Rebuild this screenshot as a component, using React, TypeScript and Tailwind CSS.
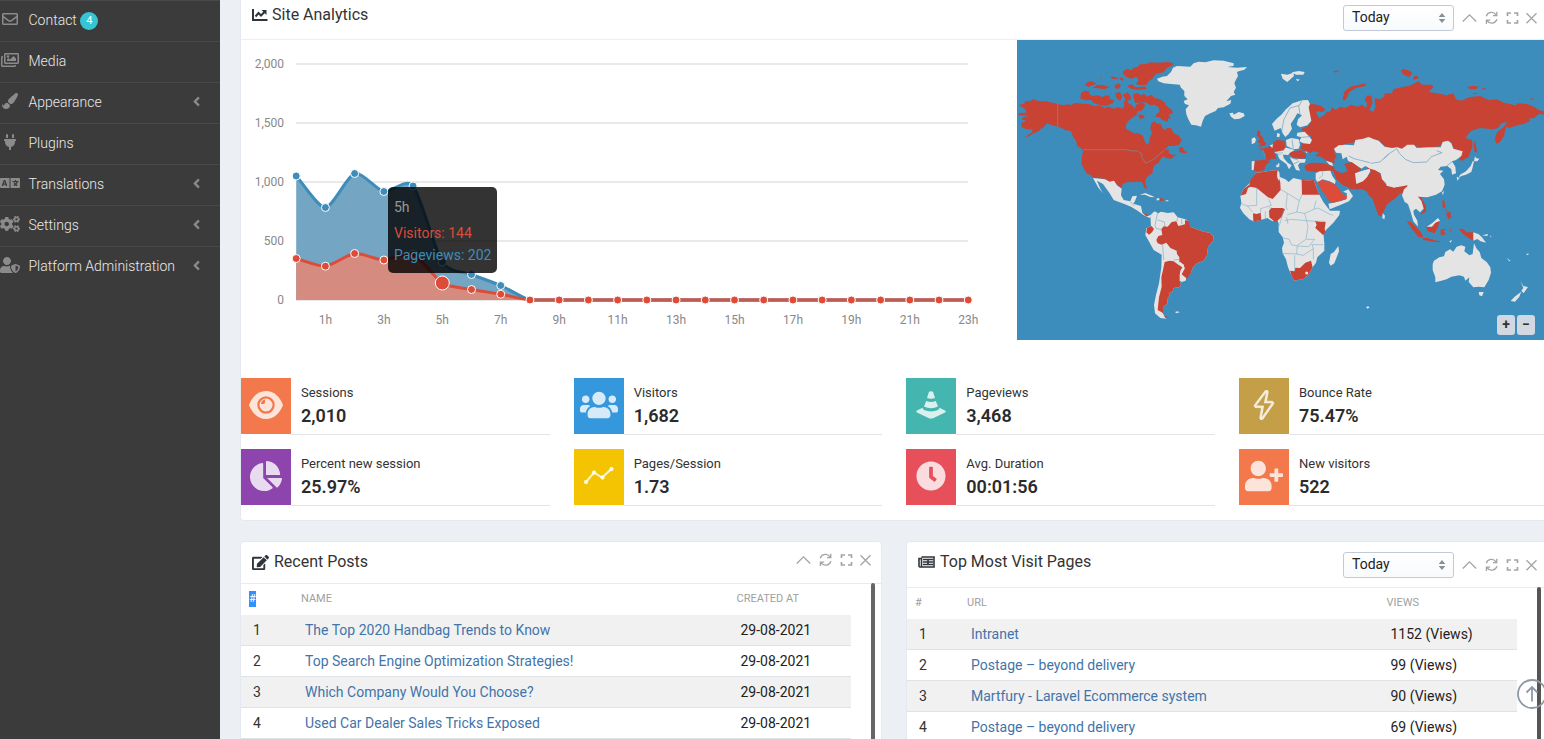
import type { ReactNode } from "react";
import { FaRegEnvelope, FaRegImages, FaPaintBrush, FaPlug, FaLanguage, FaCogs, FaUserShield, FaAngleLeft, FaUsers, FaChartPie, FaClock, FaUserPlus, FaEdit } from "react-icons/fa";
import { SlEnergy } from "react-icons/sl";

const menu: { icon: ReactNode; label: string; badge?: string; arrow?: boolean }[] = [
  { icon: <FaRegEnvelope className="size-4" />, label: "Contact", badge: "4" },
  { icon: <FaRegImages className="size-[18px]" />, label: "Media" },
  { icon: <FaPaintBrush className="size-4" />, label: "Appearance", arrow: true },
  { icon: <FaPlug className="size-4" />, label: "Plugins" },
  { icon: <FaLanguage className="size-5" />, label: "Translations", arrow: true },
  { icon: <FaCogs className="size-5" />, label: "Settings", arrow: true },
  { icon: <FaUserShield className="size-5" />, label: "Platform Administration", arrow: true },
];

function Sidebar() {
  return (
    <nav className="w-[220px] shrink-0 bg-[#3b3b3b]">
      {menu.map((m) => (
        <div key={m.label} className="flex h-[41px] items-center border-t border-[#484848] pb-0.5">
          <span className="-mt-0.5 flex w-5 shrink-0 justify-center overflow-visible text-[#8b8b8b]">{m.icon}</span>
          <span className="ml-[8.500px] whitespace-nowrap text-[14px] font-light text-[#eaeaea]">{m.label}</span>
          {m.badge && (
            <span className="ml-[3.500px] mt-[2px] flex size-[18px] items-center justify-center rounded-full bg-[#36c6d3] text-[11px] text-white">{m.badge}</span>
          )}
          {m.arrow && <FaAngleLeft className="-mt-0.5 ml-auto mr-[16px] size-[15px] text-[#8a8a8a]" />}
        </div>
      ))}
    </nav>
  );
}

function Tools() {
  return (
    <svg width="77" height="16" viewBox="0 0 77 16" fill="none" stroke="#a4a4a4" strokeWidth="1.3">
      <path d="M0.800 11.500 L7.500 4.800 L14.200 11.500" />
      <path d="M24.300 6.200 A5.400 5.400 0 0 1 34 4.800 M34.900 9.200 A5.400 5.400 0 0 1 25.200 10.800 M34.800 1.800 V5.600 H31 M24.400 14 V10.200 H28.200" />
      <path d="M45.500 6 V3 H49 M52 3 H55.500 V6 M55.500 10 V13 H52 M49 13 H45.500 V10" strokeWidth="1.700" />
      <path d="M64.500 3.200 L74.500 13.200 M74.500 3.200 L64.500 13.200" />
    </svg>
  );
}

function TodaySelect() {
  return (
    <div className="mr-2 flex h-[26px] w-[111px] items-center justify-between rounded-[3px] border border-[#c2cad8] bg-gradient-to-b from-white to-[#f8fafc] pl-2 pr-[7px] text-[14px] text-[#222]">
      <span>Today</span>
      <svg width="8" height="10" viewBox="0 0 8 10" fill="#868e96">
        <path d="M4 0 L7.300 4 H0.700Z M4 10 L7.300 6 H0.700Z" />
      </svg>
    </div>
  );
}

const HOURS = 24;
const STEP = 29.22;
const bluePts = [176, 207.5, 173.5, 191.5, 186, 262, 274.5, 285.5];
const redPts = [258.5, 266.2, 253.5, 260, 254, 283, 289.5, 294.2];
const pad = (a: number[]) => Array.from({ length: HOURS }, (_, i) => a[i] ?? 300);
const X = (i: number) => 296.2 + i * STEP;

function curve(ys: number[]) {
  const n = ys.length;
  const g = ys.map((y, i) =>
    i === 0 ? (ys[1] - y) / STEP : i === n - 1 ? (y - ys[i - 1]) / STEP : (ys[i + 1] - ys[i - 1]) / (2 * STEP)
  );
  let d = `M${X(0)},${ys[0]}`;
  const ix = STEP / 4;
  for (let i = 1; i < n; i++) {
    const a = Math.min(300, ys[i - 1] + ix * g[i - 1]);
    const b = Math.min(300, ys[i] - ix * g[i]);
    d += `C${X(i - 1) + ix},${a} ${X(i) - ix},${b} ${X(i)},${ys[i]}`;
  }
  return d;
}

function Chart() {
  const blue = pad(bluePts);
  const red = pad(redPts);
  const bd = curve(blue);
  const rd = curve(red);
  return (
    <div className="relative h-[300px] w-[776px] shrink-0">
      <svg width="776" height="300" viewBox="241 40 776 300" className="font-['Roboto']" fontSize="12" fill="#888">
        {[2000, 1500, 1000, 500, 0].map((v, i) => (
          <g key={v}>
            <path d={`M296,${64 + i * 59} H968`} stroke="#e2e2e2" strokeWidth="1.6" />
            <text x="284" y={68 + i * 59} textAnchor="end">{v.toLocaleString("en-US")}</text>
          </g>
        ))}
        {Array.from({ length: 12 }, (_, i) => i * 2 + 1).map((h) => (
          <text key={h} x={X(h)} y="324" textAnchor="middle">{h}h</text>
        ))}
        <path d={`${bd}V300H296.200Z`} fill="#74a5c2" />
        <path d={bd} fill="none" stroke="#3c8dbc" strokeWidth="3" />
        {blue.map((y, i) => (
          <circle key={i} cx={X(i)} cy={y} r="4" fill="#3c8dbc" stroke="#fff" />
        ))}
        <path d={`${rd}V300H296.200Z`} fill="#d58b80" />
        <path d={rd} fill="none" stroke="#dd4b39" strokeWidth="3" />
        <path d="M530,300 H968" stroke="#c15b50" strokeWidth="3" />
        {red.map((y, i) => (
          <circle key={i} cx={X(i)} cy={y} r={i === 5 ? 7 : 4} fill="#dd4b39" stroke="#fff" />
        ))}
      </svg>
      <div className="absolute left-[147px] top-[147px] h-[86px] w-[109px] rounded-[5px] bg-black/80 px-1.5 pt-[9px] text-[14px] leading-[22px] whitespace-nowrap">
        <div className="mb-1 text-[#999]">5h</div>
        <div className="text-[#dd4b39]">Visitors: 144</div>
        <div className="text-[#3c8dbc]">Pageviews: 202</div>
      </div>
    </div>
  );
}

const W = "#e4e4e4";
const R = "#c84334";

function WorldMap() {
  return (
    <div className="relative h-[300px] w-[527px] shrink-0 bg-[#3c8dbc]">
      <svg width="527" height="300" viewBox="1017 40 527 300" strokeLinejoin="round">
        {/* North America */}
        <g transform="translate(1017 36) scale(.33333)" fill={R}>
          <path d="M5,207 L20,203 L26,196 L40,195 L48,190 L68,196 L86,196 L100,199 L122,204 L140,208 L150,205 L162,207 L175,200 L192,203 L215,204 L232,211 L248,208 L262,216 L276,212 L290,218 L303,213 L316,218 L322,210 L320,198 L329,190 L336,204 L345,206 L352,218 L358,206 L372,198 L384,205 L382,214 L373,225 L362,226 L358,238 L345,245 L333,256 L327,268 L327,278 L340,285 L350,292 L364,292 L378,300 L383,315 L390,327 L397,318 L398,306 L405,292 L400,278 L403,262 L412,256 L422,264 L430,262 L436,275 L443,283 L450,276 L462,276 L470,292 L484,298 L494,312 L486,326 L470,330 L455,330 L440,343 L455,340 L456,352 L466,357 L478,355 L463,368 L446,366 L440,360 L430,370 L425,380 L413,388 L408,396 L407,410 L390,424 L384,434 L390,458 L382,456 L375,438 L358,437 L345,439 L332,438 L318,443 L312,456 L300,448 L291,434 L278,437 L262,428 L230,426 L222,418 L208,412 L200,396 L194,385 L195,360 L199,344 L190,336 L180,330 L178,316 L168,302 L162,286 L145,282 L125,272 L105,268 L90,262 L80,274 L72,278 L62,287 L50,292 L38,300 L22,304 L46,288 L46,280 L28,280 L15,274 L12,262 L28,254 L14,250 L20,243 L35,240 L5,238 L5,231 L28,230 L24,218Z" />
          <path d="M487,334 L498,334 L500,342 L512,350 L502,352 L486,348Z" />
          <path d="M470,82 L452,78 L420,80 L400,79 L388,84 L370,85 L362,92 L350,95 L344,103 L330,98 L318,107 L320,116 L330,124 L345,128 L358,122 L366,132 L356,144 L370,148 L388,147 L395,136 L406,128 L415,115 L440,108 L450,95 L466,89Z" />
          <path d="M348,176 L362,170 L370,178 L382,174 L390,182 L404,176 L412,186 L430,190 L444,200 L446,208 L465,222 L468,232 L455,236 L462,248 L454,246 L452,257 L436,252 L426,244 L415,242 L420,232 L428,228 L425,214 L412,206 L400,208 L390,200 L372,198 L354,202Z" />
          <path d="M192,170 L204,164 L217,166 L216,174 L226,180 L244,178 L255,184 L265,178 L278,180 L278,190 L292,192 L288,202 L266,210 L246,206 L230,202 L222,192 L206,193 L190,188Z" />
          <path d="M203,148 L212,138 L225,136 L238,143 L215,152Z M226,156 L240,146 L260,148 L278,154 L262,160 L244,157Z M282,121 L300,125 L302,130 L284,128Z M292,150 L303,142 L312,148 L308,157 L296,158Z M330,150 L345,145 L355,154 L384,152 L390,159 L360,161 L342,158Z M294,172 L308,168 L316,180 L310,194 L300,188Z M318,176 L332,168 L342,182 L340,193 L326,192Z M362,236 L378,236 L384,244 L370,249Z M308,124 L320,128 L318,134 L308,130Z M248,128 l6,-2 l0,4z" />
          <path d="M122,204 V271 M199,341 H325 L345,345 L360,344 L375,354 L374,364 L386,382 L410,370 L428,354 L441,344" fill="none" stroke="#8b7f87" strokeWidth="2.5" />
          <g fill={W}>
            <path d="M420,128 L436,122 L450,120 L462,108 L468,95 L480,90 L520,92 L530,82 L545,77 L565,79 L590,73 L620,74 L650,82 L650,89 L632,93 L660,95 L690,93 L682,101 L665,106 L660,108 L663,120 L655,135 L652,142 L657,155 L650,168 L655,176 L642,180 L628,196 L643,192 L640,203 L620,214 L603,216 L596,225 L580,232 L564,240 L557,255 L552,272 L537,268 L523,266 L514,250 L508,235 L506,220 L516,208 L504,204 L500,195 L512,190 L502,180 L502,165 L492,155 L488,146 L462,144 L440,142 L424,136Z" />
            <path d="M637,232 L648,230 L650,236 L665,228 L680,232 L683,240 L668,248 L652,250 L642,242Z" />
            <path d="M228,426 L264,430 L278,437 L291,434 L300,448 L314,458 L312,478 L320,492 L340,496 L346,481 L360,479 L354,495 L349,503 L372,510 L376,530 L388,538 L400,538 L410,527 L398,546 L378,536 L362,524 L342,512 L322,504 L290,492 L278,472 L258,444 L240,434 L250,458 L258,472 L244,455Z" />
            <path d="M368,477 L385,471 L404,479 L414,484 L400,483 L384,476Z M420,487 L428,487 L426,493 L418,493Z M446,493h8v3h-8z" />
            <path d="M704,308 L712,304 L717,310 L714,320 L704,325Z" />
          </g>
          <path d="M376,530 L390,535 L398,538 L388,541Z M428,487 L436,487 L442,493 L430,496Z" />
          <path d="M722,282 L730,287 L730,298 L738,304 L740,314 L748,322 L744,329 L722,332 L732,324 L722,318 L728,308 L719,298Z" />
        </g>

        {/* South America */}
        <g transform="translate(1017 180) scale(.33333)">
          <path d="M400,108 L412,94 L424,100 L432,95 L452,99 L470,97 L482,112 L505,118 L514,124 L520,140 L545,150 L560,155 L578,158 L590,170 L588,182 L573,200 L570,226 L560,242 L540,250 L528,262 L522,278 L508,293 L506,302 L494,306 L488,302 L492,314 L486,322 L470,324 L466,335 L455,340 L458,348 L450,358 L452,370 L440,380 L436,398 L448,416 L430,414 L414,400 L411,375 L417,345 L426,310 L433,262 L434,224 L410,210 L398,188 L385,165 L388,145 L402,138Z" fill={W} />
          <path d="M418,180 L424,168 L436,165 L433,148 L440,139 L452,140 L464,126 L478,124 L484,138 L504,133 L504,120 L516,124 L520,140 L545,150 L560,155 L578,158 L590,170 L588,182 L573,200 L570,226 L560,242 L540,250 L528,262 L522,278 L510,296 L494,283 L503,266 L500,254 L487,246 L487,232 L480,222 L479,212 L460,204 L448,188 L434,194 L422,190Z M443,246 L458,242 L470,244 L484,254 L497,262 L490,272 L488,285 L488,302 L492,314 L486,322 L470,324 L466,335 L455,340 L458,348 L450,358 L452,370 L440,380 L438,399 L422,390 L426,352 L434,320 L433,292 L438,270Z M390,143 L404,138 L411,147 L405,157 L396,164 L388,157Z M442,405 L452,412 L444,414Z" fill={R} />
          <path d="M474,396 l8,-2 l6,3 l-10,3z M484,252 L490,246 L500,254 L503,266 L492,270 L497,262Z" fill={W} />
          <path d="M433,148 L418,146 L414,136 L422,98 M422,120 L442,126 L444,139 M437,195 L440,240 M487,238 L470,240 M482,112 L480,124 M494,118 L494,132 M340,65 L352,78" fill="none" stroke="#589abe" strokeWidth="1.5" />
        </g>

        {/* Africa, southern Asia, Oceania */}
        <g transform="translate(1280 180) scale(.33333)">
          <path d="M-119,47 L-108,26 L-90,8 L-72,-22 L-50,-24 L-30,-28 L-8,-30 L-2,-22 L-2,-10 L16,-2 L26,6 L40,-6 L66,0 L102,0 L106,14 L118,44 L130,66 L150,92 L180,92 L178,105 L160,128 L138,150 L131,166 L133,192 L133,212 L112,232 L108,248 L98,262 L86,284 L70,297 L42,302 L34,286 L24,262 L18,238 L8,220 L6,204 L12,188 L8,172 L-4,156 L-4,130 L-8,120 L-22,124 L-38,114 L-58,120 L-80,124 L-92,118 L-110,100 L-120,84 L-116,68Z" fill={W} />
          <path d="M-119,47 L-108,26 L-92,14 L-88,0 L-72,-22 L-50,-24 L-30,-28 L-8,-30 L-5,-12 L1,8 L2,30 L-22,57 L-36,52 L-70,24 L-88,20 L-96,24 L-102,42Z M-81,100 L-70,102 L-58,98 L-56,121 L-80,124Z M-33,92 L-26,84 L8,84 L15,88 L4,112 L-8,122 L-16,125 L-32,112Z M65,0 L86,1 L102,0 L106,14 L118,44 L66,44Z M105,122 L120,126 L137,126 L134,146 L137,156 L130,166 L106,144 L110,134Z M30,272 L44,274 L46,263 L60,264 L76,248 L93,242 L98,262 L86,284 L70,297 L42,302 L34,286Z" fill={R} />
          <circle cx="80" cy="279" r="4.5" fill={W} />
          <path d="M-70,24 L-70,76 L-98,78 M-118,70 L-98,78 L-82,96 M-34,58 L-26,76 L-58,86 L-58,98 M-24,84 L-34,84 M-44,94 V118 M2,28 L22,40 L18,80 L22,90 M22,40 L58,62 L66,44 M58,62 L50,96 L74,100 L102,88 L108,62 M22,104 L50,96 M74,100 L80,122 L106,124 M14,122 L34,118 L80,122 L84,140 L78,178 L52,196 M8,174 L28,178 L34,194 L52,198 L50,222 L8,220 M52,198 L86,200 L104,178 L80,178 M50,222 L70,226 L100,206 L96,194 L130,194 M100,206 L100,238 M44,226 L44,272 M102,88 L114,84 L148,102 L160,106 M106,124 L136,124 M12,90 L-2,138 M20,112 L24,132" fill="none" stroke="#72a9c6" strokeWidth="1.6" />
          <path d="M175,198 L177,214 L170,232 L163,250 L152,257 L147,248 L152,222 L162,216Z" fill={W} />
          <path d="M206,26 L212,6 L228,4 L226,-8 L262,-10 L276,-30 L294,-34 L304,-10 L315,12 L345,20 L378,10 L384,16 L370,40 L362,38 L344,56 L322,72 L314,88 L304,108 L296,108 L284,76 L278,56 L268,48 L258,32 L240,26Z" fill={R} />
          <path d="M308,100 L315,107 L313,118 L307,114Z M318,10 L346,16 L346,24 L320,17Z" fill={W} />
          <path d="M366,46 L372,28 L386,16 L396,40 L412,44 L425,60 L432,85 L420,97 L408,86 L400,92 L402,104 L412,122 L414,140 L400,124 L392,96 L384,72 L374,66Z" fill={W} />
          <path d="M409,44 L420,40 L430,44 L424,54 L438,78 L438,95 L421,104 L432,88 L424,62Z M380,122 L392,126 L408,140 L424,158 L430,172 L416,172 L398,150Z M428,174 L444,174 L460,180 L480,184 L480,187 L450,184 L430,179Z M438,140 L456,140 L468,126 L478,126 L474,142 L464,160 L444,154Z M482,148 L502,148 L490,153 L498,162 L488,166 L482,164Z M536,148 L548,146 L560,157 L579,157 L580,182 L562,172 L550,162Z M487,60 L494,64 L496,84 L488,82Z M498,102 L510,94 L514,112 L506,118Z M492,84 l14,12 l-2,2z M510,142 l4,12 l-3,0z" fill={R} />
          <path d="M440,140 L456,130 L474,114 L480,122 L466,128 L456,140Z M580,157 L596,163 L606,172 L618,188 L602,184 L592,177 L580,182Z M606,166 L624,162 L622,168Z M486,38 L492,32 L489,46Z M508,183 l8,-2 l-4,7z" fill={W} />
          <path d="M458,252 L462,242 L478,232 L492,229 L496,216 L510,208 L520,215 L530,200 L544,196 L556,200 L553,214 L568,226 L578,222 L582,190 L590,206 L599,216 L604,234 L620,246 L631,262 L633,278 L626,300 L613,322 L596,320 L580,322 L566,306 L568,292 L556,302 L552,290 L538,286 L514,290 L500,298 L484,302 L466,307 L466,292 L458,270Z M596,336 L611,336 L606,349 L598,346Z M721,303 L730,318 L744,321 L736,332 L731,340 L724,332 L730,324Z M724,335 L718,350 L705,365 L692,363 L704,350Z M680,233 l12,10 l-4,1z M738,221 l10,0 l-6,5z M258,382 l6,-3 l5,3 l-6,4z M666,200 l3,6 M630,166 l5,5 l-3,1z" fill={W} />
        </g>

        {/* Northern Asia and Scandinavia */}
        <g transform="translate(1280 36) scale(.33333)">
          <path d="M86,204 L104,205 L124,210 L136,220 L130,228 L112,226 L108,232 L118,246 L134,236 L142,226 L150,228 L156,214 L168,222 L180,212 L194,216 L214,206 L232,212 L246,206 L258,216 L262,204 L254,190 L262,178 L274,180 L278,200 L268,222 L280,228 L286,214 L284,186 L300,190 L312,182 L314,172 L336,172 L340,160 L362,154 L386,150 L400,144 L415,136 L426,146 L456,146 L460,154 L446,168 L470,172 L500,178 L520,172 L528,190 L545,194 L566,184 L600,180 L626,192 L650,190 L672,200 L706,208 L714,202 L742,204 L762,212 L776,222 L794,226 L794,236 L776,234 L764,246 L746,248 L750,256 L730,264 L712,268 L688,276 L678,272 L672,300 L660,318 L650,324 L644,308 L652,288 L670,274 L682,258 L664,262 L654,276 L638,280 L600,276 L574,284 L556,306 L576,312 L578,330 L566,362 L546,374 L538,372 L546,348 L522,338 L512,318 L492,314 L482,330 L430,338 L400,328 L380,338 L350,338 L318,334 L296,314 L264,304 L226,318 L190,326 L163,338 L164,352 L170,360 L162,372 L166,382 L140,374 L122,362 L104,360 L118,350 L98,346 L90,352 L82,344 L72,346 L62,338 L66,322 L90,322 L94,300 L76,296 L64,280 L84,270 L94,256 L86,232Z" fill={R} />
          <path d="M24,350 L44,346 L62,342 L78,354 L78,366 L58,368 L40,366Z M260,386 L296,380 L300,404 L282,412 L262,398Z" fill={R} />
          <path d="M188,188 L194,166 L212,152 L256,142 L258,149 L228,156 L208,168 L200,186 L192,195Z M362,103 L372,99 L388,104 L398,112 L388,123 L370,116Z M398,126 L408,118 L418,126 L402,131Z M160,106 L180,103 L166,110Z M562,153 L578,149 L596,152 L588,160 L568,159Z M604,157 h14 l-6,5z M575,171 h16 v4z M746,191 l10,-5 l6,4z M585,310 L588,330 L592,350 L583,346 L582,325Z" fill={R} />
          <path d="M-24,264 L-10,248 L4,236 L18,220 L38,202 L66,193 L84,192 L90,204 L86,214 L94,254 L82,268 L60,274 L50,266 L54,250 L66,238 L52,232 L44,246 L32,264 L36,278 L26,294 L16,303 L8,292 L2,276 L-16,284Z M-8,290 L0,294 L-2,304 L-10,302Z M52,290 L74,287 L84,298 L96,312 L90,324 L70,322 L58,316 L64,304 L50,300Z M18,312 L34,306 L56,310 L60,326 L56,338 L40,340 L20,330Z M14,334 L44,342 L30,350 L24,358 L10,352Z M28,362 L44,368 L78,370 L74,380 L60,380 L54,388 L60,404 L48,402 L40,384Z M-6,382 l4,0 l0,10 l-4,0z M138,374 L156,380 L160,390 L148,386Z M76,344 L84,352 L78,350Z" fill={W} />
          <path d="M162,338 L176,328 L196,326 L222,328 L226,312 L250,308 L266,303 L282,310 L296,314 L314,332 L336,336 L352,334 L366,338 L382,326 L402,326 L410,336 L444,334 L482,334 L488,318 L504,314 L514,322 L520,338 L548,346 L544,360 L528,372 L516,376 L526,392 L528,412 L516,416 L514,400 L502,390 L482,392 L474,402 L490,404 L480,414 L492,430 L494,446 L486,466 L468,476 L442,484 L416,482 L400,480 L388,468 L382,448 L350,454 L322,446 L306,430 L302,412 L284,402 L270,398 L256,390 L244,398 L222,384 L204,374 L200,362 L188,370 L184,352 L168,350Z" fill={W} />
          <path d="M585,360 L588,366 L598,368 L592,376 L582,376 L578,394 L574,408 L558,416 L544,420 L536,426 L540,416 L558,406 L572,390 L578,376 L582,376Z M530,422 l8,4 l-6,8z M3,113 L22,116 L40,110 L42,120 L22,138 L8,128Z M35,109 L56,105 L74,108 L70,116 L48,116Z M48,128 l12,3 l-8,5z" fill={W} />
          <path d="M310,370 L326,354 L350,338 L358,352 L376,370 L400,380 L440,378 L454,362 L486,350 L470,344 M272,382 L300,378 L326,354 M206,360 L222,368 L246,374 L270,380 M4,290 L12,250 L30,216 L58,208 L66,193 M56,208 L60,236 M64,304 L88,302 M36,310 L40,340 M22,362 L54,372 M40,384 L58,376 M500,390 L518,376" fill="none" stroke="#5b94b8" strokeWidth="1.8" />
        </g>

        {/* Western Europe and the Middle East */}
        <g transform="translate(1235 90) scale(.33333)">
          <path d="M70,176 L88,174 L98,172 L110,164 L120,170 L118,184 L124,206 L108,206 L104,212 L90,207 L92,192 L84,182Z M58,212 L90,209 L106,214 L92,226 L88,240 L66,245 L56,240Z M116,156 L128,150 L148,152 L152,172 L144,182 L122,184 L114,172Z M208,228 L222,220 L250,218 L276,222 L298,232 L298,242 L268,242 L240,246 L214,242Z M292,236 L308,244 L320,250 L338,244 L328,222 L350,216 L380,238 L362,250 L362,282 L372,300 L345,294 L324,286 L304,268Z" fill={R} />
          <path d="M50,214 L59,213 L56,240 L50,241Z M104,166 L114,163 L112,174Z M118,187 L146,181 L162,180 L158,194 L130,194Z M128,196 L144,194 L146,204 L158,218 L170,226 L162,238 L154,222 L134,208Z M124,224 h5 v8 h-5z M242,250 L254,244 L286,242 L292,258 L302,272 L300,282 L284,274 L262,268 L248,278 L242,268Z M360,250 L382,242 L404,236 L406,244 L396,262 L384,274 L364,282Z M280,341 L318,333 L334,327 L336,310 L324,305 L340,298 L354,318 L342,334 L314,346 L284,358Z M127,246 L132,244 L134,262 L130,272 L126,258Z" fill={W} />
          <path d="M246,276 L262,270 L284,276 L300,284 L312,296 L322,312 L336,318 L334,328 L316,332 L296,338 L284,336 L274,320 L258,298Z" fill="#dd4b39" />
          <path d="M264,243 L262,256 L252,266 M118,190 L144,188 M82,175 L92,206" fill="none" stroke="#6f9fbb" strokeWidth="1.500" />
        </g>
      </svg>
      <div className="absolute bottom-[5px] right-[9px] flex gap-[2px]">
        <span className="flex h-5 w-[18px] items-center justify-center rounded-[3px] bg-[#d2d8e1] pb-0.5 text-[14px] font-bold text-[#333]">+</span>
        <span className="flex h-5 w-[18px] items-center justify-center rounded-[3px] bg-[#d2d8e1] pb-0.5 text-[14px] font-bold text-[#333]">−</span>
      </div>
    </div>
  );
}

function EyeIcon() {
  return (
    <svg width="34" height="28" viewBox="0 0 34 28">
      <path d="M0 14 C3 6 9 0 17 0 S31 6 34 14 C31 22 25 28 17 28 S3 22 0 14Z" fill="currentColor" />
      <circle cx="17" cy="14" r="7.6" fill="none" stroke="#f3784b" strokeWidth="2.2" />
      <path d="M12 13 A5 5 0 0 1 16 8.500 V11 Q16 13 14.500 13Z" fill="#f3784b" />
    </svg>
  );
}

function ConeIcon() {
  return (
    <svg width="30" height="28" viewBox="0 0 30 28" fill="currentColor">
      <path d="M13 0.8 Q15 -0.4 17 0.8 L19 7 Q15 8.5 11 7Z M10.2 10 Q15 12 19.8 10 L22 15.4 Q15 19 8 15.4Z M6.6 16.8 Q6.3 20 15 20.4 Q23.700 20 23.400 16.800 L29 19.5 Q30.500 20.600 29 21.500 L17 27.2 Q15 28 13 27.200 L1 21.500 Q-0.500 20.600 1 19.500Z" />
    </svg>
  );
}

function LineIcon() {
  return (
    <svg width="32" height="20" viewBox="0 0 32 20" fill="currentColor" stroke="currentColor">
      <path d="M3 16 L11 6.500 L19 11.500 L28.500 3" fill="none" strokeWidth="2" />
      <circle cx="3" cy="16" r="1.700" />
      <circle cx="11" cy="6.500" r="1.700" />
      <circle cx="19.500" cy="11.500" r="1.700" />
      <circle cx="28.500" cy="3" r="1.700" />
    </svg>
  );
}

const stats: { color: string; icon: ReactNode; label: string; value: string }[] = [
  { color: "bg-[#f3784b]", icon: <EyeIcon />, label: "Sessions", value: "2,010" },
  { color: "bg-[#3598dc]", icon: <FaUsers className="size-[38px]" />, label: "Visitors", value: "1,682" },
  { color: "bg-[#45b6af]", icon: <ConeIcon />, label: "Pageviews", value: "3,468" },
  { color: "bg-[#c49f47]", icon: <SlEnergy className="size-[30px]" strokeWidth="20" stroke="currentColor" />, label: "Bounce Rate", value: "75.47%" },
  { color: "bg-[#8e44ad]", icon: <FaChartPie className="size-8" />, label: "Percent new session", value: "25.97%" },
  { color: "bg-[#f4c402]", icon: <LineIcon />, label: "Pages/Session", value: "1.73" },
  { color: "bg-[#e7505a]", icon: <FaClock className="size-[30px]" />, label: "Avg. Duration", value: "00:01:56" },
  { color: "bg-[#f3784b]", icon: <FaUserPlus className="size-[38px]" />, label: "New visitors", value: "522" },
];

function Stats() {
  return (
    <div className="mt-[38px] grid w-[1330.670px] grid-cols-4 gap-y-[14px]">
      {stats.map((s) => (
        <div key={s.label} className="mr-6 flex h-[57px]">
          <div className={`flex h-14 w-[50px] shrink-0 items-center justify-center pb-0.5 text-white/80 ${s.color}`}>{s.icon}</div>
          <div className="flex-1 border-b border-[#e4e4e4] pl-2.5 pt-[6px]">
            <div className="text-[13px] leading-[18px] text-[#333]">{s.label}</div>
            <div className="pt-[2px] text-[18px] font-semibold leading-6 text-[#2b2b2b]">{s.value}</div>
          </div>
        </div>
      ))}
    </div>
  );
}

const posts = ["The Top 2020 Handbag Trends to Know", "Top Search Engine Optimization Strategies!", "Which Company Would You Choose?", "Used Car Dealer Sales Tricks Exposed"];
const pages = [
  ["Intranet", "1152 (Views)"],
  ["Postage – beyond delivery", "99 (Views)"],
  ["Martfury - Laravel Ecommerce system", "90 (Views)"],
  ["Postage – beyond delivery", "69 (Views)"],
];

function Table({ head, rows, cols, selected }: { head: string[]; rows: string[][]; cols: string; selected?: boolean }) {
  return (
    <div className="w-[610px] border-t border-[#e7ecf1]">
      <div className={`grid h-[31px] items-center text-[11px] text-[#a0a0a0] ${cols}`}>
        <span className="pl-2">
          <span className={selected ? "inline-block h-4 bg-[#3390ff] leading-4 text-white" : ""}>#</span>
        </span>
        <span>{head[0]}</span>
        <span>{head[1]}</span>
      </div>
      {rows.map((r, i) => (
        <div key={i} className={`grid h-[31px] items-center border-b border-[#dfe3e7] text-[14px] ${i % 2 ? "bg-white" : "bg-[#f1f1f1]"} ${cols}`}>
          <span className="pl-3 text-[#333]">{i + 1}</span>
          <span className="pl-1 text-[#4274a9]">{r[0]}</span>
          <span className="pl-1 text-[#222]">{r[1]}</span>
        </div>
      ))}
    </div>
  );
}

export default function App() {
  return (
    <div className="relative flex h-[739px] w-[1544px] overflow-hidden bg-[#ecf0f5] font-['Roboto',sans-serif] text-[#333]">
      <Sidebar />
      <main className="ml-5 flex w-[1304px] shrink-0 flex-col overflow-hidden">
        <section className="h-[521px] w-[1340px] shrink-0 rounded-b border-b border-l border-[#e4e9ef] bg-white">
          <header className="flex h-10 w-[1303px] border-b border-[#ebeff3] pl-[11px] pr-[5px]">
            <svg width="16" height="14" viewBox="0 0 16 14" className="mt-2" fill="none" stroke="#2f353b" strokeWidth="2">
              <path d="M1 1 V12 H15.500 M3.500 8.500 L6.500 5 L9 7.500 L13 3.500" />
              <path d="M9.500 2 H14.500 V7Z" fill="#2f353b" stroke="none" />
            </svg>
            <h2 className="ml-1 mt-[3px] text-[16px] leading-[23px]">Site Analytics</h2>
            <div className="ml-auto flex h-[35px] items-center">
              <TodaySelect />
              <Tools />
            </div>
          </header>
          <div className="flex">
            <Chart />
            <WorldMap />
          </div>
          <Stats />
        </section>
        <div className="mt-[20px] flex gap-[24px]">
          <section className="h-[200px] w-[642px] shrink-0 rounded-t border border-[#e4e9ef] bg-white">
            <header className="flex h-[41px] pl-[11px] pr-2">
              <FaEdit className="mt-[12px] size-[17px] text-[#2f353b]" />
              <h2 className="ml-[5px] mt-2 text-[16px] leading-[23px]">Recent Posts</h2>
              <div className="ml-auto flex h-9 items-center">
                <Tools />
              </div>
            </header>
            <div className="flex">
              <Table selected head={["NAME", "CREATED AT"]} cols="grid-cols-[60px_435.500px_1fr]" rows={posts.map((p) => [p, "29-08-2021"])} />
              <div className="flex-1 border-t border-[#e7ecf1] pl-5">
                <div className="-mt-px h-40 w-1 rounded bg-[#666]" />
              </div>
            </div>
          </section>
          <section className="h-[200px] w-[642px] shrink-0 rounded-t border border-[#e4e9ef] bg-white">
            <header className="flex h-[45px] w-[637px] pl-[11px] pr-[5px]">
              <svg width="17" height="12" viewBox="0 0 17 12" className="mt-[14px]" fill="none" stroke="#2f353b" strokeWidth="1.600">
                <path d="M3.500 1 H16 V11 H2 Q1 11 1 10 V2.500 H3.500 V10.500 M5 3.500 H15 M5 6 H15 M5 8.500 H15 M10 3 V9" />
              </svg>
              <h2 className="ml-[5px] mt-2 text-[16px] leading-[23px]">Top Most Visit Pages</h2>
              <div className="ml-auto flex h-[45px] items-center">
                <TodaySelect />
                <Tools />
              </div>
            </header>
            <div className="flex">
              <Table head={["URL", "VIEWS"]} cols="grid-cols-[60px_419.500px_1fr]" rows={pages} />
              <div className="flex-1 border-t border-[#e7ecf1] pl-5">
                <div className="-mt-px h-40 w-1 rounded bg-[#555]" />
              </div>
            </div>
          </section>
        </div>
      </main>
      <svg className="absolute left-[1516px] top-[678px]" width="32" height="32" viewBox="0 0 32 32" fill="none" stroke="#8f98a3" strokeWidth="1.800">
        <circle cx="16" cy="16" r="14" />
        <path d="M16 23.500 V9.500 M10.500 14.500 L16 9 L21.500 14.500" />
      </svg>
    </div>
  );
}
